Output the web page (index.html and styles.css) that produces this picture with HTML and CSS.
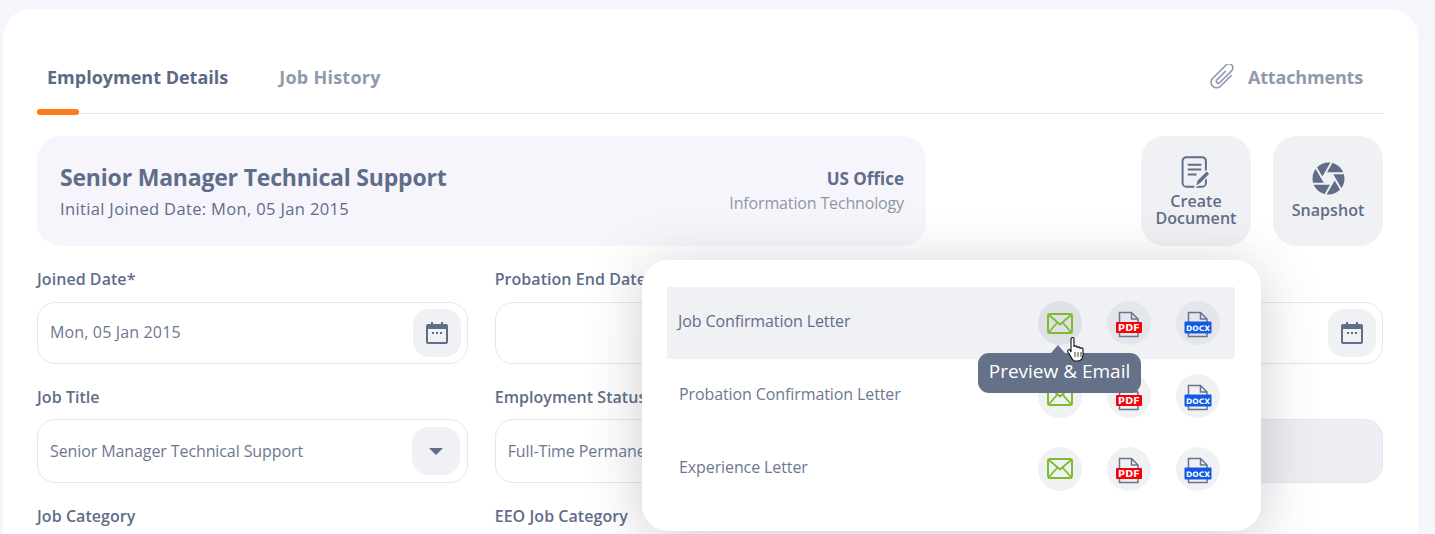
FILE: index.html
```html
<!DOCTYPE html>
<html lang="en">
<head>
<meta charset="utf-8">
<title>Employment Details</title>
<link rel="stylesheet" href="styles.css">
</head>
<body>
<svg class="defs" width="0" height="0" aria-hidden="true">
  <symbol id="i-mail" viewBox="0 0 26 21">
    <rect x="1" y="1" width="24" height="19" rx="2" fill="none" stroke="#7cbd2c" stroke-width="2"/>
    <path d="M2 2l11 9.5L24 2M2 19l8-9M24 19l-8-9" fill="none" stroke="#7cbd2c" stroke-width="1.8"/>
  </symbol>
  <symbol id="i-cal" viewBox="0 0 22 24">
    <path d="M2 3h3V1h2v2h8V1h2v2h3a2 2 0 0 1 2 2v16a2 2 0 0 1-2 2H2a2 2 0 0 1-2-2V5a2 2 0 0 1 2-2z" fill="#5f6d89"/>
    <rect x="2" y="8" width="18" height="13" fill="#f0f1f5"/>
    <path d="M6 11h2v2H6zM10 11h2v2h-2zM14 11h2v2h-2z" fill="#5f6d89"/>
  </symbol>
  <symbol id="i-page" viewBox="0 0 30 30">
    <path d="M5.500 14V4.500h12l6.500 6.500v3M5.500 25v3.500H24V25M17.500 4.500V11H24" fill="none" stroke="#67748f" stroke-width="1.500"/>
  </symbol>
</svg>
<main class="card">
  <nav class="tabs">
    <a class="tab tab-active">Employment Details</a>
    <a class="tab tab-history">Job History</a>
    <a class="tab tab-right">
      <svg class="clip" viewBox="0 0 28 26" width="28" height="26"><g transform="translate(15 13) rotate(45)"><path d="M4 -6V9a5.500 5.500 0 0 1-11 0V-10a4 4 0 0 1 8 0V7a2 2 0 0 1-4 0V-5" fill="none" stroke="#8e9bb0" stroke-width="1.600" stroke-linecap="round"/></g></svg>
      Attachments
    </a>
  </nav>

  <section class="summary">
    <div class="banner">
      <div>
        <h1 class="banner-title">Senior Manager Technical Support</h1>
        <p class="banner-sub">Initial Joined Date: Mon, 05 Jan 2015</p>
      </div>
      <div class="banner-right">
        <strong class="office">US Office</strong>
        <span class="dept">Information Technology</span>
      </div>
    </div>
    <div class="actions">
      <button class="action">
        <svg viewBox="0 0 30 34" width="30" height="33"><rect x="1.200" y="1.200" width="24" height="30.500" rx="4" fill="none" stroke="#5f6d89" stroke-width="2"/><path d="M6.500 9h14M6.500 14h14M6.500 19h9" stroke="#5f6d89" stroke-width="2"/><path d="M14 32l2-7 9-9c1.500-1.500 5 1.500 3.500 3.500l-9 9z" fill="#5f6d89" stroke="#f0f1f4" stroke-width="1.500"/></svg>
        <span>Create<br>Document</span>
      </button>
      <button class="action action-snap">
        <svg viewBox="0 0 34 34" width="33" height="33"><circle cx="17" cy="17" r="16.500" fill="#5f6d89"/><path d="M10.650 17L21 -1M23.350 17L13 35M13.820 22.500L3 3.800M20.180 11.500L31 30.200M13.820 11.500H35M20.180 22.500H-1" stroke="#f0f1f4" stroke-width="2" fill="none"/><path d="M10.650 17l3.170-5.500h6.360l3.170 5.500-3.170 5.500h-6.360z" fill="#f0f1f4"/></svg>
        <span>Snapshot</span>
      </button>
    </div>
  </section>

  <section class="form">
    <div class="field">
      <label class="label">Joined Date*</label>
      <div class="input"><span class="value value-date">Mon, 05 Jan 2015</span><span class="addon"><svg width="22" height="24"><use href="#i-cal"/></svg></span></div>
    </div>
    <div class="field">
      <label class="label">Probation End Date</label>
      <div class="input"></div>
    </div>
    <div class="field">
      <label class="label">Date of Permanency</label>
      <div class="input"><span class="addon"><svg width="22" height="24"><use href="#i-cal"/></svg></span></div>
    </div>
    <div class="field">
      <label class="label label-tight">Job Title</label>
      <div class="input input-tall"><span class="value">Senior Manager Technical Support</span><span class="addon addon-select"><i class="caret"></i></span></div>
    </div>
    <div class="field">
      <label class="label label-tight">Employment Status</label>
      <div class="input input-tall"><span class="value">Full-Time Permanent</span></div>
    </div>
    <div class="field">
      <label class="label label-tight">Effective Date</label>
      <div class="input input-tall input-off"></div>
    </div>
    <div class="field">
      <label class="label">Job Category</label>
    </div>
    <div class="field">
      <label class="label">EEO Job Category</label>
    </div>
  </section>
</main>

<aside class="popup">
  <div class="doc doc-hover">
    <span class="doc-name">Job Confirmation Letter</span>
    <span class="doc-btn"><svg width="26" height="21"><use href="#i-mail"/></svg></span>
    <span class="doc-btn"><svg class="fileicon" viewBox="0 0 30 30" width="30" height="30"><use href="#i-page"/><rect x="2" y="14" width="26" height="11" rx="1" fill="#f90008"/><text class="ftxt" x="15" y="23" text-anchor="middle">PDF</text></svg></span>
    <span class="doc-btn"><svg class="fileicon" viewBox="0 0 30 30" width="30" height="30"><use href="#i-page"/><rect x="1.500" y="13.500" width="27" height="12" rx="1" fill="#1259e6"/><text class="ftxt ftxt-sm" x="15" y="22.500" text-anchor="middle">DOCX</text></svg></span>
  </div>
  <div class="doc">
    <span class="doc-name">Probation Confirmation Letter</span>
    <span class="doc-btn"><svg width="26" height="21"><use href="#i-mail"/></svg></span>
    <span class="doc-btn"><svg class="fileicon" viewBox="0 0 30 30" width="30" height="30"><use href="#i-page"/><rect x="2" y="14" width="26" height="11" rx="1" fill="#f90008"/><text class="ftxt" x="15" y="23" text-anchor="middle">PDF</text></svg></span>
    <span class="doc-btn"><svg class="fileicon" viewBox="0 0 30 30" width="30" height="30"><use href="#i-page"/><rect x="1.500" y="13.500" width="27" height="12" rx="1" fill="#1259e6"/><text class="ftxt ftxt-sm" x="15" y="22.500" text-anchor="middle">DOCX</text></svg></span>
  </div>
  <div class="doc">
    <span class="doc-name">Experience Letter</span>
    <span class="doc-btn"><svg width="26" height="21"><use href="#i-mail"/></svg></span>
    <span class="doc-btn"><svg class="fileicon" viewBox="0 0 30 30" width="30" height="30"><use href="#i-page"/><rect x="2" y="14" width="26" height="11" rx="1" fill="#f90008"/><text class="ftxt" x="15" y="23" text-anchor="middle">PDF</text></svg></span>
    <span class="doc-btn"><svg class="fileicon" viewBox="0 0 30 30" width="30" height="30"><use href="#i-page"/><rect x="1.500" y="13.500" width="27" height="12" rx="1" fill="#1259e6"/><text class="ftxt ftxt-sm" x="15" y="22.500" text-anchor="middle">DOCX</text></svg></span>
  </div>
</aside>

<div class="tooltip">Preview &amp; Email</div>
<svg class="cursor" viewBox="0 0 18 25" width="18" height="25"><path d="M4 2c0-2 3-2 3 0v8c0-1.500 3-1.500 3 0v1c0-1.500 3-1.500 3 0v1c0-1.500 3-1.500 3 0v6c0 3-2 6-5 6H8c-2 0-3-2-4-4l-3-5c-1-2 1-3 2-2l1 2z" fill="#fff" stroke="#111" stroke-width="1.100"/><path d="M8 15v5M11 15v5M14 15v5" stroke="#111" stroke-width=".8"/></svg>
</body>
</html>
```
FILE: styles.css
```css
* { box-sizing: border-box; }
html, body { margin: 0; height: 534px; overflow: hidden; }
body {
  background: #f5f5fb;
  font-family: "Open Sans", "Noto Sans", sans-serif;
  color: #5f6d89;
  padding: 9px 17px 0 3px;
  position: relative;
}
.defs { position: absolute; }
.card {
  background: #fff;
  border-radius: 28px 28px 0 0;
  padding: 0 34px;
  height: 525px;
  overflow: hidden;
}
.tabs {
  display: flex;
  align-items: center;
  height: 105px;
  padding: 31px 21px 0 10px;
  border-bottom: 1px solid #e4e4e8;
  position: relative;
  gap: 51px;
}
.tab { font-size: 18px; font-weight: 700; color: #8f9aaa; position: relative; }
.tab-history { letter-spacing: .25px; }
.tab-active { color: #5b6a85; }
.tab-active::after {
  content: "";
  position: absolute;
  left: -10px;
  bottom: -26px;
  width: 42px;
  height: 6px;
  border-radius: 3px;
  background: #ff7a1a;
}
.tab-right { margin-left: auto; display: flex; align-items: center; gap: 11px; letter-spacing: -.17px; }
.clip { display: block; }
.summary { display: flex; justify-content: space-between; margin-top: 22px; }
.banner {
  width: 889px;
  height: 110px;
  background: #f5f5fb;
  border-radius: 24px;
  padding: 25px 22px 0 23px;
  display: flex;
  justify-content: space-between;
}
.banner-title { margin: 0; font-size: 23px; line-height: 32px; font-weight: 700; color: #5f6d89; letter-spacing: -.2px; }
.banner-sub { margin: 5px 0 0; font-size: 16.500px; line-height: 22px; color: #5f6d89; letter-spacing: .35px; }
.banner-right { display: flex; flex-direction: column; align-items: flex-end; padding-top: 5px; }
.office { font-size: 17px; font-weight: 700; line-height: 26px; color: #5f6d89; }
.dept { font-size: 16px; line-height: 22px; color: #9097a5; letter-spacing: -.15px; }
.actions { display: flex; gap: 22px; margin-right: 1px; }
.action {
  width: 110px;
  height: 110px;
  border: 0;
  border-radius: 24px;
  background: #f0f1f4;
  color: #5f6d89;
  font: 600 16px/17px "Open Sans", sans-serif;
  letter-spacing: .05px;
  display: flex;
  flex-direction: column;
  align-items: center;
  justify-content: center;
  gap: 4px;
  padding: 0;
}
.action-snap svg { margin-top: -2px; }
.action-snap span { margin-top: 3px; }
.form {
  display: grid;
  grid-template-columns: repeat(3, 1fr);
  column-gap: 27px;
  margin-top: 22px;
  padding-right: 1px;
}
.field { display: flex; flex-direction: column; }
.label { font-size: 16px; line-height: 22px; font-weight: 600; color: #5f6d89; letter-spacing: .05px; margin-bottom: 12px; }
.label-tight { margin-bottom: 11px; }
.input {
  height: 62px;
  border: 1px solid #e6e6ee;
  border-radius: 18px;
  display: flex;
  align-items: center;
  justify-content: space-between;
  padding: 0 6px 0 12px;
  margin-bottom: 22px;
}
.input-tall { height: 64px; margin-bottom: 22px; }
.input-off { background: #eeeef4; }
.value { font-size: 16px; color: #6c7890; letter-spacing: -.1px; }
.value-date { letter-spacing: .15px; padding-bottom: 2px; }
.addon {
  width: 48px;
  height: 48px;
  margin-left: auto;
  border-radius: 16px;
  background: #f0f1f5;
  display: flex;
  align-items: center;
  justify-content: center;
}
.addon-select { margin-right: 1px; }
.caret { width: 0; height: 0; border: 7px solid transparent; border-top: 7px solid #5f6d89; border-bottom: 0; }

.popup {
  position: absolute;
  left: 642px;
  top: 260px;
  width: 619px;
  height: 271px;
  background: #fff;
  border-radius: 26px;
  padding: 27px 26px 0 25px;
  box-shadow: 0 8px 55px rgba(60, 60, 80, .25);
}
.doc {
  height: 73px;
  display: flex;
  align-items: center;
  padding-left: 12px;
  padding-right: 15px;
  gap: 25px;
  border-radius: 2px;
}
.doc-hover { background: #f0f1f5; height: 72px; }
.doc-name { flex: 1; font-size: 16px; color: #6c7890; letter-spacing: -.1px; padding-bottom: 3px; }
.doc-hover .doc-name { margin-left: -1px; color: #5f6d89; padding-bottom: 5px; }
.doc-btn {
  width: 44px;
  height: 44px;
  border-radius: 50%;
  background: #f0f1f3;
  display: flex;
  align-items: center;
  justify-content: center;
}
.doc-hover .doc-btn { background: #e5e6ea; }
.doc-hover .doc-btn:nth-child(2) { background: #dfe1e7; }
.ftxt { font: 700 9.500px "DejaVu Sans", sans-serif; fill: #fff; letter-spacing: .3px; }
.ftxt-sm { font-size: 7.500px; letter-spacing: 0; }
.tooltip {
  position: absolute;
  left: 978px;
  top: 353px;
  width: 163px;
  height: 40px;
  background: #657188;
  border-radius: 11px;
  color: #fff;
  font-size: 19px;
  line-height: 37px;
  text-align: center;
}
.tooltip::before {
  content: "";
  position: absolute;
  left: 73px;
  top: -8px;
  border: 7px solid transparent;
  border-bottom: 8px solid #657188;
  border-top: 0;
}
.cursor { position: absolute; left: 1067px; top: 337px; }
```
